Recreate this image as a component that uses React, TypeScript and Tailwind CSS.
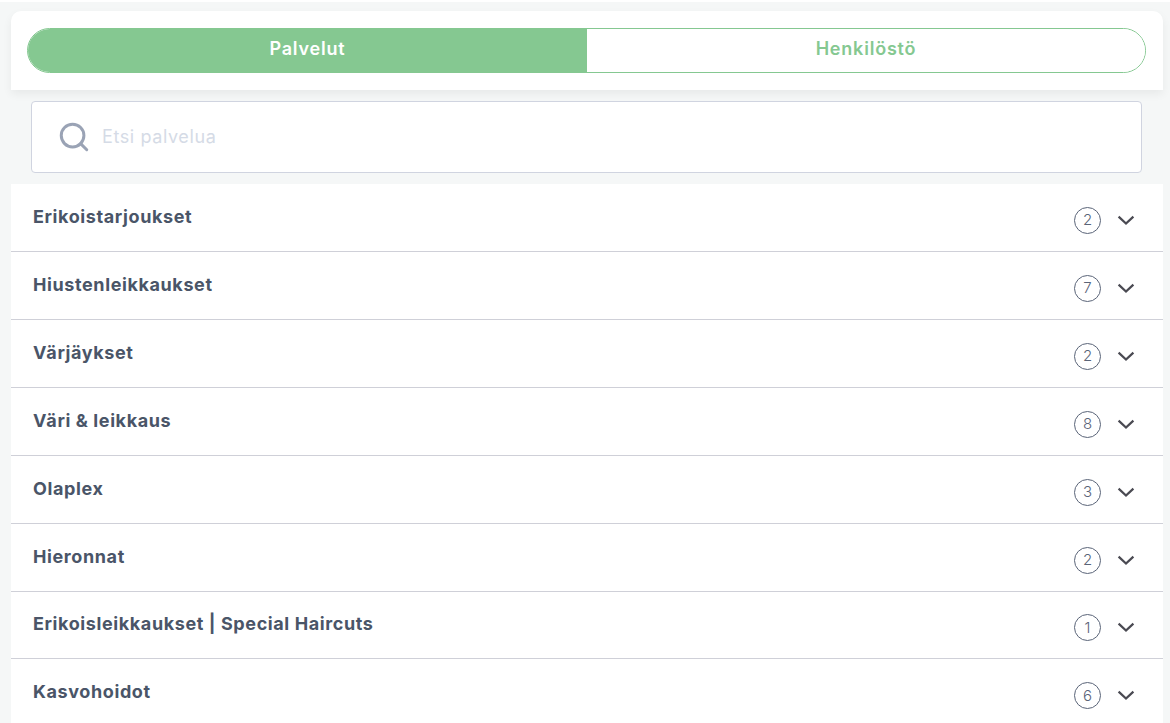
import { Search } from "lucide-react";

const categories = [
  { name: "Erikoistarjoukset", count: 2 },
  { name: "Hiustenleikkaukset", count: 7 },
  { name: "Värjäykset", count: 2 },
  { name: "Väri & leikkaus", count: 8 },
  { name: "Olaplex", count: 3 },
  { name: "Hieronnat", count: 2 },
  { name: "Erikoisleikkaukset | Special Haircuts", count: 1 },
  { name: "Kasvohoidot", count: 6 },
];

function Chevron() {
  return (
    <svg width="18" height="11" viewBox="0 0 18 11" fill="none" className="ml-[16px]">
      <path d="M1.6 1.6L9 8.6L16.4 1.6" stroke="#4a4a52" strokeWidth="2.2" />
    </svg>
  );
}

export default function App() {
  return (
    <div className="h-[723px] overflow-hidden bg-white pt-[2px] font-['Inter',sans-serif]">
      <div className="h-[721px] overflow-hidden bg-[#f5f7f7] px-[11px] pt-[9px] pr-[7px]">
        {/* Tabs */}
        <div className="h-[79px] rounded-t-[10px] bg-white px-[16px] pr-[17px] pt-[17px] shadow-[0_4px_10px_rgba(0,0,0,0.06)]">
          <div className="flex h-[45px] overflow-hidden rounded-[24px] border border-[#85c891] text-[18px] font-semibold tracking-[0.8px]">
            <div className="flex w-[559px] items-center justify-center bg-[#85c891] pb-[5px] text-white">Palvelut</div>
            <div className="flex flex-1 items-center justify-center bg-white pb-[5px] text-[#85c891]">Henkilöstö</div>
          </div>
        </div>

        {/* Search */}
        <div className="mx-[20px] mr-[21px] mt-[11px] flex h-[72px] items-center rounded-[4px] border border-[#d0d4e0] bg-white pl-[25px]">
          <Search size={34} strokeWidth={2.1} color="#9aa3b5" className="shrink-0" />
          <span className="mb-[2px] ml-[11px] text-[18px] tracking-[0.6px] text-[#d5dbe6]">Etsi palvelua</span>
        </div>

        {/* Categories */}
        <div className="mt-[11.2px] bg-white">
          {categories.map((c) => (
            <div key={c.name} className="flex h-[67.9px] items-center border-b border-[#cfd0d8] pl-[22px] pr-[28px]">
              <span className="mb-[2px] flex-1 text-[18px] font-bold tracking-[0.6px] text-[#4a5568]">{c.name}</span>
              <div className="mt-[6px] flex items-center">
                <span className="flex h-[27px] w-[27px] items-center justify-center rounded-full border border-[#5a6478] text-[15px] font-light text-[#5a6478]">
                  {c.count}
                </span>
                <Chevron />
              </div>
            </div>
          ))}
        </div>
      </div>
    </div>
  );
}
